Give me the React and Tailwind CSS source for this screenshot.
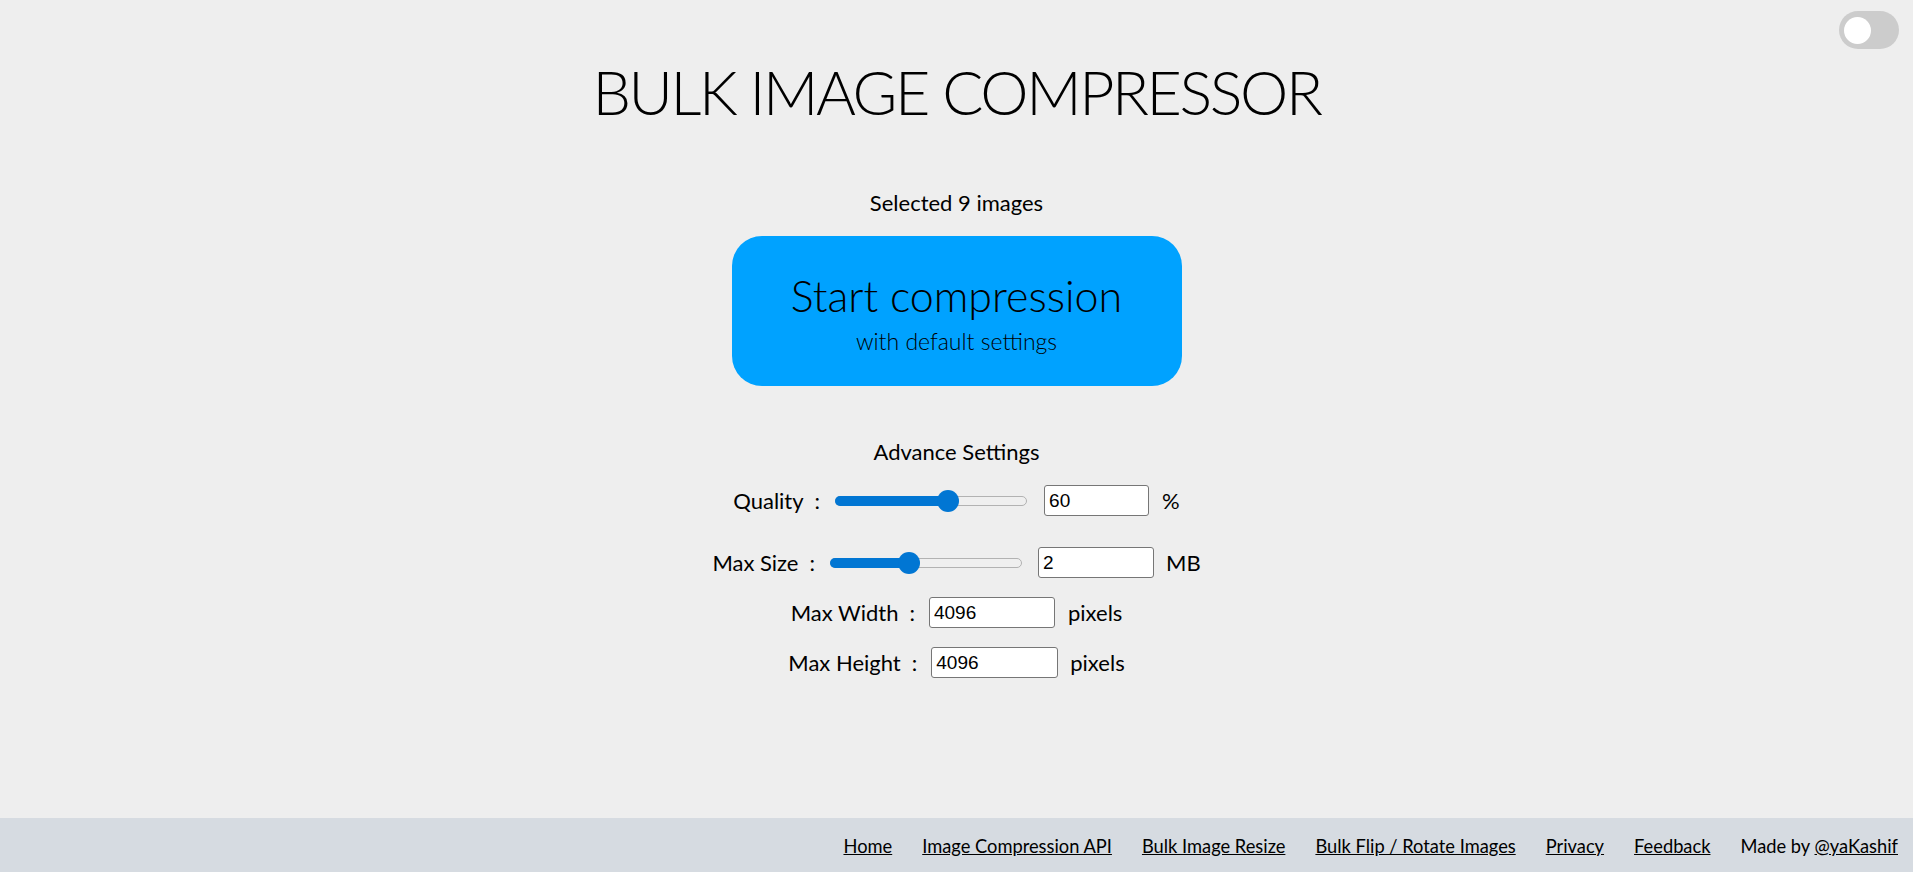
import { useState } from 'react'

// Range track drawn with divs so the thumb sits where the picture has it
function Slider({ value }) {
  return (
    <div className="relative ml-[15px] flex h-[22px] w-[192px] items-center">
      <div className="h-[10px] w-full rounded-full border border-[#b2b2b2] bg-[#efefef]" />
      <div
        className="absolute left-0 h-[10px] rounded-full bg-[#0176d3]"
        style={{ width: `calc((100% - 22px) * ${value / 100} + 11px)` }}
      />
      <div
        className="absolute h-[22px] w-[22px] rounded-full bg-[#0176d3]"
        style={{ left: `calc((100% - 22px) * ${value / 100})` }}
      />
    </div>
  )
}

function Field({ value, className }) {
  return (
    <input
      defaultValue={value}
      className={`${className} block h-[31px] rounded-[3px] border border-[#767676] bg-white px-[4px] font-['Liberation_Sans',Arial,sans-serif] text-[19px] text-black outline-none`}
    />
  )
}

function Label({ children }) {
  return (
    <span className="flex items-center">
      {children}
      <span className="ml-[11px]">:</span>
    </span>
  )
}

export default function App() {
  const [dark, setDark] = useState(false)

  return (
    <div className="flex min-h-screen flex-col bg-[#eeeeee] font-['Lato','Noto_Sans',sans-serif] text-[22px] text-black">
      {/* theme switch */}
      <button
        onClick={() => setDark(!dark)}
        className="absolute right-[14px] top-[11px] flex h-[38px] w-[60px] items-center rounded-full bg-[#cccccc] px-[5px]"
      >
        <span className="h-[27px] w-[27px] rounded-full bg-white" />
      </button>

      <main className="flex flex-1 flex-col items-center">
        <h1 className="mt-[61px] text-[61px] font-light leading-none tracking-[-2.4px]">BULK IMAGE COMPRESSOR</h1>

        <p className="mt-[69px] leading-[24px]">Selected 9 images</p>

        <button className="mt-[21px] flex h-[150px] w-[450px] flex-col items-center rounded-[30px] bg-[#00a2ff] pt-[39px]">
          <span className="text-[43px] font-light leading-[42px]">Start compression</span>
          <span className="mt-[12px] text-[23px] font-light leading-[24px]">with default settings</span>
        </button>

        <p className="mt-[54px] leading-[24px]">Advance Settings</p>

        <div className="mt-[21px] flex h-[31px] items-center">
          <Label>Quality</Label>
          <Slider value={60} />
          <Field value="60" className="ml-[17px] w-[105px]" />
          <span className="ml-[13px]">%</span>
        </div>

        <div className="mt-[31px] flex h-[31px] items-center">
          <Label>Max Size</Label>
          <Slider value={40} />
          <Field value="2" className="ml-[16px] w-[116px]" />
          <span className="ml-[12px]">MB</span>
        </div>

        <div className="mt-[19px] flex h-[31px] items-center">
          <Label>Max Width</Label>
          <Field value="4096" className="ml-[14px] w-[126px]" />
          <span className="ml-[13px]">pixels</span>
        </div>

        <div className="mt-[19px] flex h-[31px] items-center">
          <Label>Max Height</Label>
          <Field value="4096" className="ml-[14px] w-[127px]" />
          <span className="ml-[12px]">pixels</span>
        </div>
      </main>

      <footer className="flex h-[54px] items-center justify-end gap-[30px] bg-[#d6dbe1] pr-[15px] pt-[3px] text-[18.3px]">
        <a href="#" className="underline">Home</a>
        <a href="#" className="underline">Image Compression API</a>
        <a href="#" className="underline">Bulk Image Resize</a>
        <a href="#" className="underline">Bulk Flip / Rotate Images</a>
        <a href="#" className="underline">Privacy</a>
        <a href="#" className="underline">Feedback</a>
        <span>
          Made by <a href="#" className="underline">@yaKashif</a>
        </span>
      </footer>
    </div>
  )
}
